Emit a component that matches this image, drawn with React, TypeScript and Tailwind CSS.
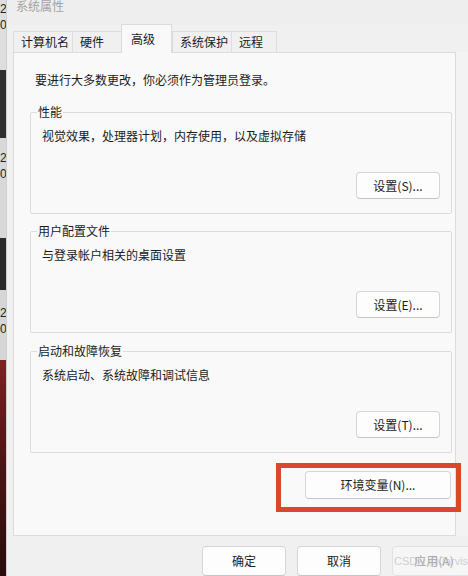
import React from "react";

const font = "font-['Noto_Sans_CJK_SC','Noto_Sans',sans-serif]";

function Btn({ label, w = "w-[84px]", h = "h-[27px]" }: { label: string; w?: string; h?: string }) {
  return (
    <div
      className={`${w} ${h} flex items-center justify-center rounded-[4px] border border-[#d6d6d6] border-b-[#c6c6c6] bg-[#fdfdfd] text-[12px] leading-[16px] text-[#1b1b1b]`}
    >
      {label}
    </div>
  );
}

function Group({ title, text, btn, mt }: { title: string; text: string; btn: string; mt: string }) {
  return (
    <div className={`relative ${mt} h-[102px] border border-[#dcdcdc] rounded-[2px] flex flex-col justify-between pt-[15px] pb-[14px] pl-[11px] pr-[11px]`}>
      <span className="absolute -top-[9px] left-[6px] bg-[#f9f9f9] px-[1px] text-[12px] leading-[16px] text-[#1b1b1b]">
        {title}
      </span>
      <div className="text-[12px] leading-[16px] text-[#1b1b1b]">{text}</div>
      <div className="flex justify-end">
        <Btn label={btn} />
      </div>
    </div>
  );
}

function Tab({ label, w, active }: { label: string; w: string; active?: boolean }) {
  if (active) {
    return (
      <div
        className={`${w} relative z-10 -mb-px h-[29px] flex items-start pt-[6px] pl-[9px] bg-[#f9f9f9] border border-b-0 border-[#dcdcdc] text-[12px] leading-[16px] text-[#1b1b1b]`}
      >
        {label}
      </div>
    );
  }
  return (
    <div
      className={`${w} h-[21px] flex items-center pl-[7px] bg-[#f0f0f0] border border-b-0 border-r-0 border-[#dddddd] text-[12px] leading-[16px] text-[#1b1b1b]`}
    >
      {label}
    </div>
  );
}

export default function App() {
  return (
    <div className={`w-[468px] h-[576px] overflow-hidden flex bg-[#f0f0f0] ${font}`}>
      {/* desktop strip on the left */}
      <div className="w-[6px] h-full flex flex-col overflow-hidden shrink-0 text-[12px] leading-[15px] text-[#222] font-['Liberation_Sans',sans-serif]">
        <div className="h-[70px] bg-[#dedede] pt-[2px] flex flex-col gap-[1px]">
          <div>2</div>
          <div>0:</div>
        </div>
        <div className="h-[68px] bg-[#2f2f2f]" />
        <div className="h-[100px] bg-[#d8d8d8] pt-[13px] flex flex-col gap-[1px]">
          <div>2</div>
          <div>0:</div>
        </div>
        <div className="h-[52px] bg-[#2b2b2b]" />
        <div className="h-[70px] bg-[#d6d6d6] pt-[16px] flex flex-col gap-[1px]">
          <div>2</div>
          <div>0:</div>
        </div>
        <div className="flex-1 bg-gradient-to-b from-[#7a2424] via-[#4a1414] to-[#2a0c0c]" />
      </div>

      {/* window */}
      <div className="flex-1 h-full flex flex-col border-l border-[#cfcfcf] bg-[#f0f0f0]">
        {/* title bar */}
        <div className="h-[27px] flex items-start justify-between pl-[9px] bg-[#eeeeee]">
          <span className="text-[12px] leading-[12px] text-[#a3a3a3]">系统属性</span>
          <span className="text-[14px] leading-[12px] -mt-[1px] -mr-[4px] text-[#b0b0b0]">×</span>
        </div>

        {/* tabs */}
        <div className="h-[27px] flex items-end pl-[6px]">
          <Tab label="计算机名" w="w-[59px]" />
          <Tab label="硬件" w="w-[49px]" />
          <Tab label="高级" w="w-[51px]" active />
          <Tab label="系统保护" w="w-[59px]" />
          <div className="w-[46px] h-[21px] flex items-center pl-[7px] bg-[#f0f0f0] border border-b-0 border-[#dddddd] text-[12px] leading-[16px] text-[#1b1b1b]">
            远程
          </div>
        </div>

        {/* panel row */}
        <div className="flex pl-[6px]">
          <div className="w-[443px] h-[484px] bg-[#f9f9f9] border border-[#dcdcdc] flex flex-col pt-[19px] pl-[16px] pr-[3px]">
            <div className="pl-[5px] text-[12px] leading-[16px] text-[#1b1b1b]">
              要进行大多数更改，你必须作为管理员登录。
            </div>
            <Group
              mt="mt-[24px]"
              title="性能"
              text="视觉效果，处理器计划，内存使用，以及虚拟存储"
              btn="设置(S)..."
            />
            <Group mt="mt-[17px]" title="用户配置文件" text="与登录帐户相关的桌面设置" btn="设置(E)..." />
            <Group mt="mt-[18px]" title="启动和故障恢复" text="系统启动、系统故障和调试信息" btn="设置(T)..." />
            <div className="mt-[18px] flex justify-end pr-[1px]">
              <div className="relative">
                <Btn label="环境变量(N)..." w="w-[146px]" h="h-[28px]" />
                <div className="absolute -left-[29px] -right-[10px] -top-[8px] -bottom-[13px] border-[5px] border-[#d9482c] pointer-events-none" />
              </div>
            </div>
          </div>
          <div className="flex-1 bg-[#f3f3f3]" />
        </div>

        {/* bottom buttons */}
        <div className="flex-1 flex pt-[10px] pl-[195px] gap-[11px]">
          <Btn label="确定" w="w-[84px] shrink-0" h="h-[30px]" />
          <Btn label="取消" w="w-[84px] shrink-0" h="h-[30px]" />
          <div className="relative w-[84px] shrink-0 h-[30px] flex items-center justify-center rounded-[4px] border border-[#e2e2e2] bg-[#f6f6f6] text-[12px] leading-[16px] text-[#a8a8a8]">
            <span className="absolute left-[1px] top-[7px] text-[11px] leading-[14px] text-[#cfcfcf] font-['Liberation_Sans',sans-serif] whitespace-nowrap">
              CSDN @Jarvis
            </span>
            <span className="relative">应用(A)</span>
          </div>
        </div>
      </div>
    </div>
  );
}
